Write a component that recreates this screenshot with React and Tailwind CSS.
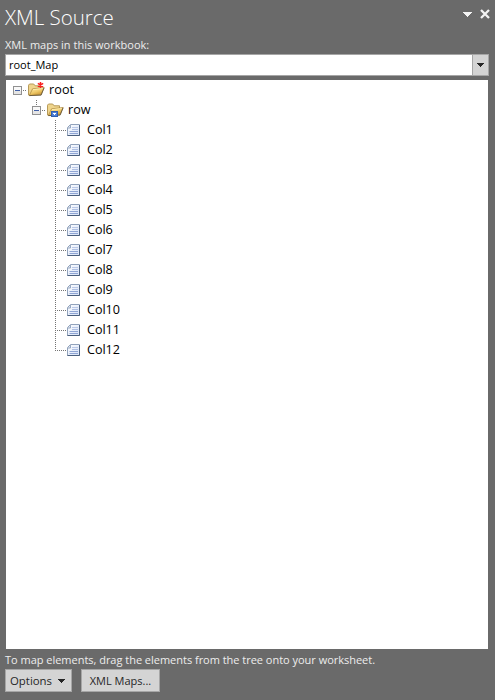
import React from "react";

const columns = Array.from({ length: 12 }, (_, i) => `Col${i + 1}`);

function Arrow({ className }) {
  return (
    <svg className={className} width="9" height="5" viewBox="0 0 9 5" fill="currentColor" shapeRendering="crispEdges">
      <path d="M0 0h9v1H8v1H7v1H6v1H5v1H4V4H3V3H2V2H1V1H0z" />
    </svg>
  );
}

function Expander() {
  return (
    <svg className="shrink-0" width="9" height="9" viewBox="0 0 9 9" shapeRendering="crispEdges">
      <rect x=".5" y=".5" width="8" height="8" fill="#f8f8f8" stroke="#919191" />
      <path d="M1 5h7v3H1z" fill="#e5e5e5" />
      <path d="M2 4h5v1H2z" fill="#3f5fa8" />
    </svg>
  );
}

function Folder({ kind }) {
  return (
    <svg className="shrink-0" width="17" height="16" viewBox="0 0 17 16">
      <defs>
        <linearGradient id={kind} x1=".2" y1="0" x2=".8" y2="1">
          <stop offset="0" stopColor="#ffeaa2" />
          <stop offset=".5" stopColor="#efca6b" />
          <stop offset="1" stopColor="#c38a22" />
        </linearGradient>
      </defs>
      <path d="M.5 13V3.2L1.5 2h4.2l1.4 1.8h5.4v3L3 13.5z" fill="#efd58d" stroke="#b79a58" />
      <path d="M1.3 13.5L4.6 6.8l11.5-1.3-3 7.3z" fill={`url(#${kind})`} stroke="#a98236" strokeWidth=".7" />
      <path d="M1.4 13.6l11.7-.5 3-7.3" fill="none" stroke="#67583b" strokeWidth=".9" />
      <path d="M5 7.6l9.8-1.1" stroke="#fff2b9" strokeWidth=".8" />
      {kind === "required" ? (
        <path d="M12.5 0v6M9.8 1.4l5.4 3.2M9.8 4.6l5.4-3.2" stroke="#fa2020" strokeWidth="1.5" />
      ) : (
        <>
          <rect x="4.5" y="9.5" width="6" height="5" fill="#4e7fd5" stroke="#315eae" />
          <path d="M6 11h3v1H8v1H7v-1H6z" fill="#fff" />
        </>
      )}
    </svg>
  );
}

function Leaf() {
  return (
    <svg className="shrink-0" width="14" height="13" viewBox="0 0 14 13">
      <defs>
        <linearGradient id="page" x1="0" y1="0" x2="1" y2="1">
          <stop offset="0" stopColor="#fff" />
          <stop offset="1" stopColor="#d5e1f8" />
        </linearGradient>
      </defs>
      <path d="M3.5.5h9v11H.5v-8z" fill="url(#page)" stroke="#91a2bb" />
      <path d="M3.5 1v3H1" fill="#d5dfed" stroke="#91a2bb" strokeWidth=".9" />
      <path d="M5 3.5h6" stroke="#b9c8e7" />
      <path d="M5 5.5h6" stroke="#aebfe3" />
      <path d="M2.5 7.5H11M2.5 9.5H11" stroke="#8fa5d4" />
      <path d="M12.5 1v10.5H.5" fill="none" stroke="#4b607f" />
    </svg>
  );
}

function ColumnRow({ name, last }) {
  return (
    <li className="flex h-5 items-center">
      <span className={`flex w-[12px] shrink-0 self-stretch ${last ? "pb-[9px]" : ""}`}>
        <span className="w-px bg-[repeating-linear-gradient(to_bottom,#747474_0_1px,transparent_1px_2px)]" />
        <span className={`h-px w-[10px] bg-[repeating-linear-gradient(to_right,transparent_0_1px,#747474_1px_2px)] ${last ? "self-end" : "mt-[10px]"}`} />
      </span>
      <Leaf />
      <span className="ml-[6px] text-[12.6px] leading-5 tracking-[-0.05px]">{name}</span>
    </li>
  );
}

export default function App() {
  return (
    <main className="flex h-[700px] w-[495px] flex-col overflow-hidden bg-[#6a6a6a] pl-[5px] pr-[6px] font-['Open_Sans','Noto_Sans',sans-serif] text-black">
      <header className="-mr-px flex h-9 shrink-0 items-start justify-between">
        <h1 className="mt-[3px] whitespace-nowrap text-[20.5px] font-light leading-[29px] tracking-[-0.02px] text-white">XML Source</h1>
        <div className="flex items-center pt-[9px] text-[#f3f3f3]">
          <button aria-label="Pane menu" className="mr-[8px]"><Arrow /></button>
          <button aria-label="Close">
            <svg width="10" height="10" viewBox="0 0 10 10">
              <path d="M1 1l8 8M9 1L1 9" stroke="currentColor" strokeWidth="2.3" />
            </svg>
          </button>
        </div>
      </header>
      <label className="h-[18px] shrink-0 whitespace-nowrap text-[11px] leading-[18px] tracking-[0.01px] text-[#ededed]">XML maps in this workbook:</label>
      <div className="flex h-[22px] shrink-0 border border-[#a6a6a6] bg-white">
        <span className="flex-1 pl-[3px] text-[11px] leading-5">root_Map</span>
        <span className="flex w-[16px] items-center justify-center border-l border-[#a6a6a6] bg-[#d4d4d4] text-[#262626]">
          <svg width="7" height="4" viewBox="0 0 7 4" fill="currentColor" shapeRendering="crispEdges"><path d="M0 0h7v1H6v1H5v1H4v1H3V3H2V2H1V1H0z" /></svg>
        </span>
      </div>
      <section className="ml-px mt-[4px] h-[569px] w-[482px] shrink-0 bg-white">
        <div className="flex h-5 items-center pl-[7px]">
          <Expander />
          <span className="mr-px h-px w-[5px] bg-[repeating-linear-gradient(to_right,transparent_0_1px,#747474_1px_2px)]" />
          <Folder kind="required" />
          <span className="ml-[4px] text-[12.6px] leading-5 tracking-[0.1px]">root</span>
        </div>
        <div className="flex h-5 items-center pl-[26px]">
          <span className="flex w-[9px] flex-col items-center self-stretch">
            <span className="mb-px h-[5px] w-px bg-[repeating-linear-gradient(to_bottom,#747474_0_1px,transparent_1px_2px)]" />
            <Expander />
          </span>
          <span className="mr-px h-px w-[5px] bg-[repeating-linear-gradient(to_right,transparent_0_1px,#747474_1px_2px)]" />
          <Folder kind="repeating" />
          <span className="ml-[4px] text-[12.6px] leading-5">row</span>
        </div>
        <ul className="pl-[49px]">
          {columns.map((name, i) => <ColumnRow key={name} name={name} last={i === columns.length - 1} />)}
        </ul>
      </section>
      <p className="h-[20px] shrink-0 whitespace-nowrap pt-[2px] text-[11px] leading-[18px] tracking-[-0.02px] text-[#ededed]">To map elements, drag the elements from the tree onto your worksheet.</p>
      <footer className="flex gap-[9px]">
        <button className="flex h-[23px] w-[67px] items-center whitespace-nowrap border border-[#a6a6a6] bg-[#d4d4d4] pl-[4px] text-[11.4px] text-[#262626]">
          Options
          <svg className="ml-[6px]" width="7" height="4" viewBox="0 0 7 4" fill="currentColor" shapeRendering="crispEdges"><path d="M0 0h7v1H6v1H5v1H4v1H3V3H2V2H1V1H0z" /></svg>
        </button>
        <button className="h-[23px] w-[79px] whitespace-nowrap border border-[#a6a6a6] bg-[#d4d4d4] text-[11px] leading-5 text-[#262626]">XML Maps...</button>
      </footer>
    </main>
  );
}
